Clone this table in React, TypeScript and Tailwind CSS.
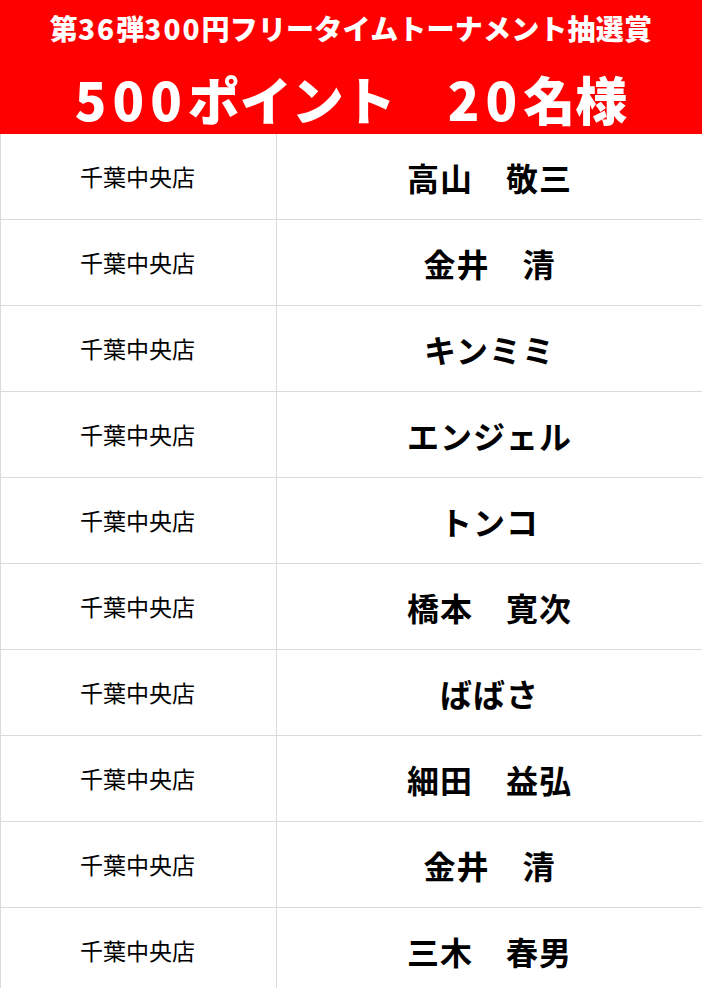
const winners = [
  { store: "千葉中央店", name: "高山　敬三" },
  { store: "千葉中央店", name: "金井　清" },
  { store: "千葉中央店", name: "キンミミ" },
  { store: "千葉中央店", name: "エンジェル" },
  { store: "千葉中央店", name: "トンコ" },
  { store: "千葉中央店", name: "橋本　寛次" },
  { store: "千葉中央店", name: "ばばさ" },
  { store: "千葉中央店", name: "細田　益弘" },
  { store: "千葉中央店", name: "金井　清" },
  { store: "千葉中央店", name: "三木　春男" },
];

export default function App() {
  return (
    <div className="w-[702px] h-[988px] overflow-hidden bg-white font-['Noto_Sans_CJK_JP',sans-serif] text-black">
      {/* Header */}
      <div className="h-[134px] bg-[#ff0000] text-white flex flex-col items-center font-black">
        <div className="mt-[9px] h-[38px] leading-[38px] text-[28px] tracking-[0.2px]">
          第<span className="tracking-[2px]">36</span>弾<span className="tracking-[2px]">300</span>円フリータイムトーナメント抽選賞
        </div>
        <div className="mt-[22px] h-[60px] leading-[60px] text-[52px]">
          <span className="tracking-[6px]">500</span>ポイント　<span className="tracking-[6px]">20</span>名様
        </div>
      </div>

      {/* Winners */}
      <div className="border-l border-[#dadada]">
        {winners.map((w, i) => (
          <div key={i} className="grid grid-cols-[276px_1fr] h-[86px] border-b border-[#dadada]">
            <div className="flex items-center justify-center border-r border-[#dadada] text-[23px] pr-[2px]">
              {w.store}
            </div>
            <div className="flex items-center justify-center text-[32px] font-bold tracking-[1px]">
              {w.name}
            </div>
          </div>
        ))}
      </div>
    </div>
  );
}
